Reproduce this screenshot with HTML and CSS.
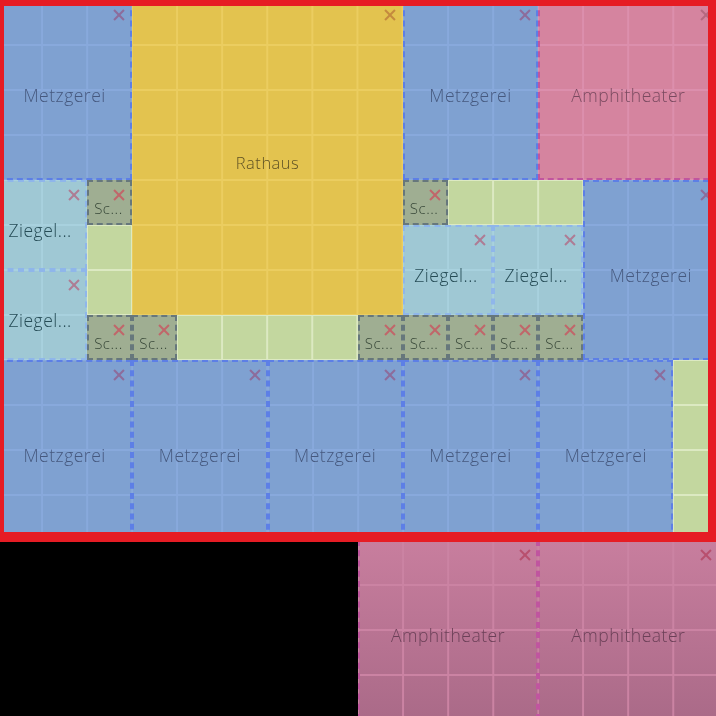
FILE: index.html
```html
<!DOCTYPE html>
<html lang="en">
<head>
    <meta charset="UTF-8">
    <meta name="viewport" content="width=device-width, initial-scale=1.0">
    <title>Stadtplan</title>
    <link rel="stylesheet" href="styles.css">
</head>
<body>
    <div class="map">
        <!-- row 1 -->
        <div class="tile metz c1 r1"><span class="del"></span>Metzgerei</div>
        <div class="tile rathaus c4 r1"><span class="del"></span>Rathaus</div>
        <div class="tile metz c10 r1"><span class="del"></span>Metzgerei</div>
        <div class="tile amphi c13 r1"><span class="del"></span>Amphitheater</div>
        <!-- row 5 -->
        <div class="tile ziegel c1 r5"><span class="del"></span>Ziegel...</div>
        <div class="tile sc c3 r5"><span class="del"></span>Sc...</div>
        <div class="tile sc c10 r5"><span class="del"></span>Sc...</div>
        <div class="tile green g31 c11 r5"></div>
        <div class="tile metz c14 r5"><span class="del"></span>Metzgerei</div>
        <!-- row 6 / 7 -->
        <div class="tile green g12 c3 r6"></div>
        <div class="tile ziegel c10 r6"><span class="del"></span>Ziegel...</div>
        <div class="tile ziegel c12 r6"><span class="del"></span>Ziegel...</div>
        <div class="tile ziegel c1 r7"><span class="del"></span>Ziegel...</div>
        <!-- row 8 -->
        <div class="tile sc c3 r8"><span class="del"></span>Sc...</div>
        <div class="tile sc c4 r8"><span class="del"></span>Sc...</div>
        <div class="tile green g41 c5 r8"></div>
        <div class="tile sc c9 r8"><span class="del"></span>Sc...</div>
        <div class="tile sc c10 r8"><span class="del"></span>Sc...</div>
        <div class="tile sc c11 r8"><span class="del"></span>Sc...</div>
        <div class="tile sc c12 r8"><span class="del"></span>Sc...</div>
        <div class="tile sc c13 r8"><span class="del"></span>Sc...</div>
        <!-- row 9 -->
        <div class="tile metz c1 r9"><span class="del"></span>Metzgerei</div>
        <div class="tile metz c4 r9"><span class="del"></span>Metzgerei</div>
        <div class="tile metz c7 r9"><span class="del"></span>Metzgerei</div>
        <div class="tile metz c10 r9"><span class="del"></span>Metzgerei</div>
        <div class="tile metz c13 r9"><span class="del"></span>Metzgerei</div>
        <div class="tile green g14 c16 r9"></div>
        <!-- below the frame -->
        <div class="tile amphi low c9 r13"><span class="del"></span>Amphitheater</div>
        <div class="tile amphi low c13 r13"><span class="del"></span>Amphitheater</div>
    </div>
    <div class="frame"></div>
</body>
</html>
```

FILE: styles.css
```css
html, body {
    margin: 0;
    height: 100%;
    background-color: #000;
    overflow: hidden;
}
.map {
    display: grid;
    grid-template-columns: repeat(16, 45.1px);
    grid-auto-rows: 45px;
    width: 722px;
    height: 720px;
    margin-left: -3px;
    font-family: "Open Sans", sans-serif;
    font-size: 17.5px;
    font-weight: 300;
    letter-spacing: 0.5px;
    filter: blur(0.7px);
}
.frame {
    position: absolute;
    left: 0;
    top: 0;
    width: 716px;
    height: 542px;
    box-sizing: border-box;
    border-style: solid;
    border-color: #e61c24;
    border-width: 6px 8px 10px 4px;
}
.tile {
    position: relative;
    box-sizing: border-box;
    display: flex;
    align-items: center;
    justify-content: center;
    padding-top: 10px;
    border: 2px dashed var(--edge);
    color: var(--ink);
    background-color: var(--fill);
    background-image:
        linear-gradient(to right, var(--line) 2px, transparent 2px),
        linear-gradient(to bottom, var(--line) 2px, transparent 2px);
    background-size: 45.1px 45px;
    background-position: -1px -1px;
    background-origin: border-box;
    white-space: nowrap;
}
/* delete cross, top right of a tile */
.del {
    position: absolute;
    top: 7px;
    right: 5px;
    width: 12px;
    height: 12px;
}
.del::before, .del::after {
    content: "";
    position: absolute;
    left: -1px;
    top: 5px;
    width: 14px;
    height: 2px;
    background-color: var(--mark);
    transform: rotate(45deg);
}
.del::after {
    transform: rotate(-45deg);
}
/* tile types */
.metz {
    --fill: #7fa1d1;
    --line: #88a9dc;
    --edge: #5d7fe6;
    --ink: #46597f;
    --mark: #8d6c9b;
    grid-column-end: span 3;
    grid-row-end: span 4;
}
.rathaus {
    --fill: #e3c34f;
    --line: #ebcd60;
    --edge: transparent;
    --ink: #5f5224;
    --mark: #c48a3e;
    font-size: 16.5px;
    grid-column-end: span 6;
    grid-row-end: span 7;
}
.amphi {
    --fill: #d5849f;
    --line: #dc8fad;
    --edge: #c0559f;
    --ink: #7a4a60;
    --mark: #b5687f;
    grid-column-end: span 4;
    grid-row-end: span 4;
}
.low {
    --line: #cb83a3;
    --mark: #b8506e;
    --ink: #6c4058;
    background-image:
        linear-gradient(to right, var(--line) 2px, transparent 2px),
        linear-gradient(to bottom, var(--line) 2px, transparent 2px),
        linear-gradient(to bottom, #c87e9e, #aa6a88);
    background-size: 45.1px 45px, 45.1px 45px, 100% 100%;
    background-position: -1px -1px, -1px -1px, 0 0;
}
.ziegel {
    --fill: #9fc8d4;
    --line: #a8d1de;
    --edge: #8fb6ea;
    --ink: #264c56;
    --mark: #ae7c94;
    padding-right: 4px;
    grid-column-end: span 2;
    grid-row-end: span 2;
}
.sc {
    --fill: #9fae92;
    --line: #9fae92;
    --edge: #66777c;
    --ink: #354536;
    --mark: #c0666a;
    justify-content: flex-start;
    padding-left: 5px;
    font-size: 15px;
}
.green {
    --fill: #c3d79f;
    --line: #dce9c2;
    --edge: transparent;
}
.g12 { grid-row-end: span 2; }
.g31 { grid-column-end: span 3; }
.g41 { grid-column-end: span 4; }
.g14 { grid-row-end: span 4; }
/* grid placement */
.c1 { grid-column-start: 1; }
.c3 { grid-column-start: 3; }
.c4 { grid-column-start: 4; }
.c5 { grid-column-start: 5; }
.c7 { grid-column-start: 7; }
.c9 { grid-column-start: 9; }
.c10 { grid-column-start: 10; }
.c11 { grid-column-start: 11; }
.c12 { grid-column-start: 12; }
.c13 { grid-column-start: 13; }
.c14 { grid-column-start: 14; }
.c16 { grid-column-start: 16; }
.r1 { grid-row-start: 1; }
.r5 { grid-row-start: 5; }
.r6 { grid-row-start: 6; }
.r7 { grid-row-start: 7; }
.r8 { grid-row-start: 8; }
.r9 { grid-row-start: 9; }
.r13 { grid-row-start: 13; }
```
